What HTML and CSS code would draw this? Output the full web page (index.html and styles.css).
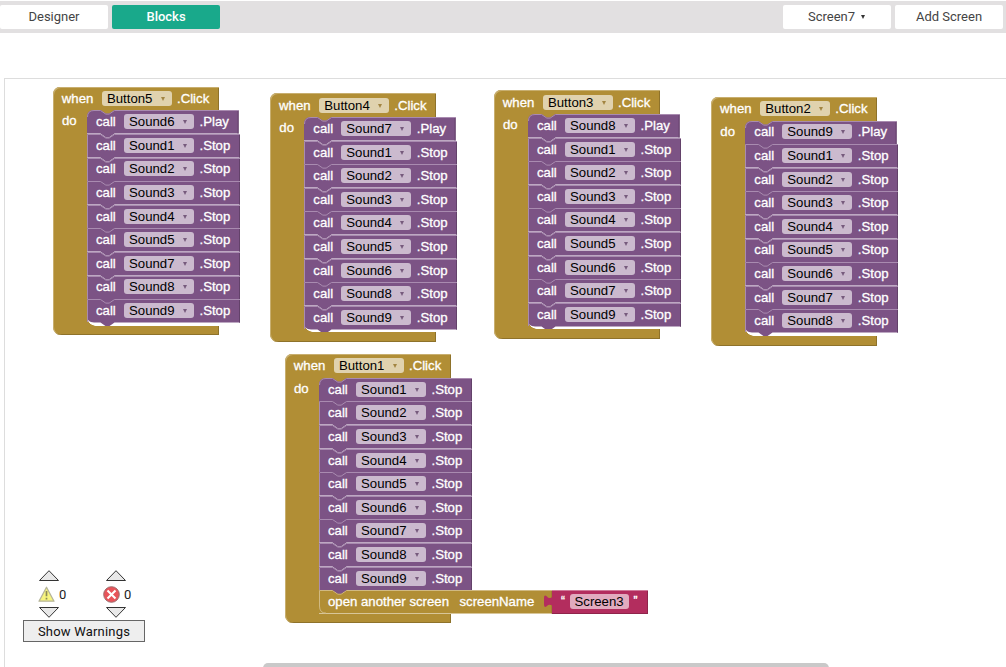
FILE: index.html
```html
<!DOCTYPE html>
<html lang="en">
<head>
<meta charset="utf-8">
<title>Blocks editor</title>
<link rel="stylesheet" href="styles.css">
</head>
<body>
<header class="toolbar">
  <button class="tool">Designer</button>
  <button class="tool active">Blocks</button>
  <span class="spacer"></span>
  <button class="tool">Screen7<i class="caret"></i></button>
  <button class="tool">Add Screen</button>
</header>
<main class="workspace" id="workspace">
  <section class="warnings">
    <div class="counters">
      <div class="counter">
        <svg class="arrow" viewBox="0 0 20 11"><path d="M.5 10.5 10 .7l9.5 9.8z"/></svg>
        <div class="count">
          <svg class="sign" viewBox="0 0 17 17"><path d="M8.5 1.2 16 15.2H1z" fill="#f7f47e" stroke="#b5b49a" stroke-width="1.3" stroke-linejoin="round"/><path d="M8.5 5v5.2M8.5 11.7v1.8" stroke="#8d8b55" stroke-width="1.7"/></svg>
          <span>0</span>
        </div>
        <svg class="arrow" viewBox="0 0 20 11"><path d="M.5.5 10 10.3 19.5.5z"/></svg>
      </div>
      <div class="counter">
        <svg class="arrow" viewBox="0 0 20 11"><path d="M.5 10.5 10 .7l9.5 9.8z"/></svg>
        <div class="count error">
          <svg class="sign" viewBox="0 0 17 17"><circle cx="8.5" cy="8.5" r="7.8" fill="#e8545a" stroke="#9a6d6f"/><path d="m4.5 4.5 8 8m0-8-8 8" stroke="#fff" stroke-width="2.1"/></svg>
          <span>0</span>
        </div>
        <svg class="arrow" viewBox="0 0 20 11"><path d="M.5.5 10 10.3 19.5.5z"/></svg>
      </div>
    </div>
    <button class="show">Show Warnings</button>
  </section>
  <div class="scrollbar"></div>
</main>
<script src="blocks.js"></script>
</body>
</html>
```
FILE: styles.css
```css
* { box-sizing: border-box; }
body {
  margin: 0;
  height: 667px;
  padding-top: 1px;
  overflow: hidden;
  background: #fff;
  font-family: Roboto, sans-serif;
}
.toolbar {
  display: flex;
  gap: 4px;
  height: 32px;
  padding: 4px 3px 4px 0;
  background: #e2e0e1;
}
.tool {
  width: 108px;
  height: 24px;
  padding: 0;
  border: 0;
  border-radius: 2px;
  background: #fff;
  color: #444;
  font: 13px/24px Roboto, sans-serif;
}
.tool.active { background: #19a98b; color: #fff; font-weight: 500; }
.spacer { flex: 1; }
.caret {
  display: inline-block;
  margin: 0 1px 2px 6px;
  border: 2.5px solid transparent;
  border-top: 4px solid #333;
  border-bottom: 0;
}
.workspace {
  position: relative;
  height: 589px;
  margin: 45px 0 0 4px;
  border: solid #ddd;
  border-width: 1px 0 0 1px;
}
.block {
  position: absolute;
  z-index: 0;
  color: #fff;
  font: 13.2px/15px "Liberation Sans", Arial, sans-serif;
  -webkit-text-stroke: .3px;
  white-space: pre;
}
.head {
  display: flex;
  align-items: center;
  width: 166px;
  height: 23.8px;
  padding-left: 8.8px;
  border-radius: 7px 0 0 0;
  background: #b18e35;
  box-shadow: inset 1px 1px 0 #c8af70, inset -1px 0 0 #8e722a;
}
.word { width: 40.2px; }
.field {
  display: flex;
  justify-content: space-between;
  align-items: center;
  width: 70px;
  height: 15px;
  margin-right: 5px;
  padding: 0 7px 0 5px;
  border-radius: 3px;
  background: #e0d2ae;
  color: #000;
  -webkit-text-stroke: 0;
}
.field::after {
  content: "";
  margin-top: 1px;
  border: 2.5px solid transparent;
  border-top: 4px solid #a28542;
  border-bottom: 0;
}
.middle { display: flex; }
.side {
  width: 34px;
  padding: 3px 0 0 9px;
  background: #b18e35;
  box-shadow: inset 1px 0 0 #c8af70;
}
.stack { width: 153px; padding-bottom: 3px; }
.stack.full { padding-bottom: 0; }
.row {
  position: relative;
  display: flex;
  align-items: center;
  width: 153px;
  height: 23.6px;
  padding: 0 0 .8px 9px;
}
.row.play { width: 151.6px; }
.row .word { width: 28px; }
.row .field { margin-right: 5.5px; background: #cbbace; }
.row .field::after { border-top-color: #775b7d; }
.shape {
  position: absolute;
  z-index: -1;
  left: 0;
  top: 0;
  width: 100%;
  height: 28px;
  overflow: visible;
}
.under { fill: #b18e35; }
.fill { fill: #7c5385; }
.edge { fill: none; stroke: #a98bb0; }
.shade { fill: none; stroke: #63426a; }
.open .fill { fill: #b18e35; }
.open .edge { stroke: #d0b982; }
.open .shade { stroke: #8e722a; }
.row.open { width: 233.5px; }
.open .label { width: 131.5px; }
.foot {
  width: 166px;
  height: 9.6px;
  border-radius: 0 0 0 8px;
  background: #b18e35;
  box-shadow: inset 1px 0 0 #c8af70, inset -1px -1px 0 #8e722a;
}
.corner {
  position: absolute;
  z-index: -1;
  left: 0;
  width: 9px;
  height: 9px;
  bottom: -3px;
  background: radial-gradient(circle at 9px 0, #fff 8.5px, #b18e35 9px);
}
.value {
  position: absolute;
  z-index: 1;
  left: 233px;
  top: 0;
  display: flex;
  align-items: center;
  width: 95.5px;
  height: 23.6px;
  padding: 0 0 1px 9px;
  background: #b32d5e;
  box-shadow: inset 0 1px 0 #d07a9a, inset -1px -1px 0 #8f244b;
}
.value .plug {
  position: absolute;
  left: -8px;
  top: 5px;
  width: 12px;
  height: 14px;
  overflow: visible;
}
.plug path { fill: #b32d5e; }
.value .quote { width: 8.5px; font-size: 12px; }
.value .field { width: 59px; margin-right: 5px; background: #e1abbf; }
.value .field::after { display: none; }
.warnings {
  position: absolute;
  left: 18px;
  top: 491px;
  width: 122px;
}
.counters { display: flex; gap: 37px; padding-left: 14px; }
.counter { width: 30px; }
.arrow { display: block; width: 20px; height: 11px; margin-left: 2px; }
.arrow path { fill: #e8e8e8; stroke: #333; }
.count {
  display: flex;
  align-items: center;
  gap: 4px;
  height: 26px;
  padding-top: 2px;
  font-size: 13px;
  color: #222;
}
.sign { width: 17px; height: 17px; margin: 0 0 2px 1px; flex: none; }
.count span { margin-top: -1px; }
.error .sign { margin-left: -1px; }
.show {
  display: block;
  width: 122px;
  height: 22px;
  margin-top: 2px;
  padding: 1px 0 0;
  border: 1.5px solid #666;
  outline: 0;
  background: #eee;
  color: #111;
  font: 13px/18px Roboto, sans-serif;
  letter-spacing: .2px;
}
.scrollbar {
  position: absolute;
  left: 258px;
  top: 584px;
  width: 566px;
  height: 10px;
  border-radius: 5px;
  background: #c9c9c9;
}
```
FILE: blocks.js
```js
const blocks = [
  { x: 53, y: 86.6, n: 5, play: 6, stop: [1, 2, 3, 4, 5, 7, 8, 9] },
  { x: 270.3, y: 93.3, n: 4, play: 7, stop: [1, 2, 3, 4, 5, 6, 8, 9] },
  { x: 494, y: 90.3, n: 3, play: 8, stop: [1, 2, 3, 4, 5, 6, 7, 9] },
  { x: 711.3, y: 96.8, n: 2, play: 9, stop: [1, 2, 3, 4, 5, 6, 7, 8] },
  { x: 285, y: 354.1, n: 1, stop: [1, 2, 3, 4, 5, 6, 7, 8, 9], open: "Screen3" }
];

// Outline of a statement: notch in the top edge, tab below the bottom edge.
function shape(w, first, last, tab) {
  const top = first ? "M0 7Q0 0 7 0H13.5" : "M0 0H13.5";
  const notch = "l5.3 3.6h3.4l5.3-3.6";
  const under = tab ? "H27.5l-5.3 3.6h-3.4l-5.3-3.6" : "";
  const end = last && tab ? "H7Q0 23.6 0 16.6z" : "H0z";
  const edge = first ? "M.5 7Q.5 .5 7 .5H13.5" : tab ? "M.5 23V.5H13.5" : "M7 23.1Q.5 23.1 .5 16V.5H13.5";
  return `<svg class="shape">${first ? '<path class="under" d="M0-.5H30V8H0z"/>' : ""}` +
    `<path class="fill" d="${top}${notch}H${w}V23.6${under}${end}"/>` +
    `<path class="edge" d="${edge}${notch}H${w}"/>` +
    `<path class="shade" d="M${w - .5} 1V23.6"/></svg>`;
}

function call(n, verb, first, last) {
  return `<div class="row ${verb.toLowerCase()}">${last ? '<i class="corner"></i>' : ""}` +
    shape(verb === "Play" ? 151.6 : 153, first, last, true) +
    `<span class="word">call</span><span class="field">Sound${n}</span><span>.${verb}</span></div>`;
}

for (const b of blocks) {
  const calls = (b.play ? [[b.play, "Play"]] : []).concat(b.stop.map(n => [n, "Stop"]));
  let rows = calls.map(([n, verb], i) =>
    call(n, verb, i === 0, !b.open && i === calls.length - 1)).join("");
  if (b.open) {
    rows += `<div class="row open">${shape(233.5, false, true, false)}` +
      `<svg class="shape"><path fill="#7c5385" d="M13.5 0l5.3 3.6h3.4l5.3-3.6z"/></svg>` +
      `<span class="label">open another screen</span><span>screenName</span>` +
      `<div class="value"><svg class="plug"><path d="M9 1.5Q5 4.5 3 1.5Q0-1 0 3V9.5Q0 13.5 3 11Q5 8.5 9 11z"/></svg>` +
      `<span class="quote">“</span><span class="field">${b.open}</span><span class="quote">”</span></div></div>`;
  }
  const el = document.createElement("article");
  el.className = "block";
  el.style.left = b.x - 5 + "px";
  el.style.top = b.y - 79 + "px";
  el.innerHTML = `<div class="head"><span class="word">when</span><span class="field">Button${b.n}</span><span>.Click</span></div>` +
    `<div class="middle"><div class="side">do</div><div class="stack${b.open ? " full" : ""}">${rows}</div></div><div class="foot"></div>`;
  document.getElementById("workspace").append(el);
}
```
